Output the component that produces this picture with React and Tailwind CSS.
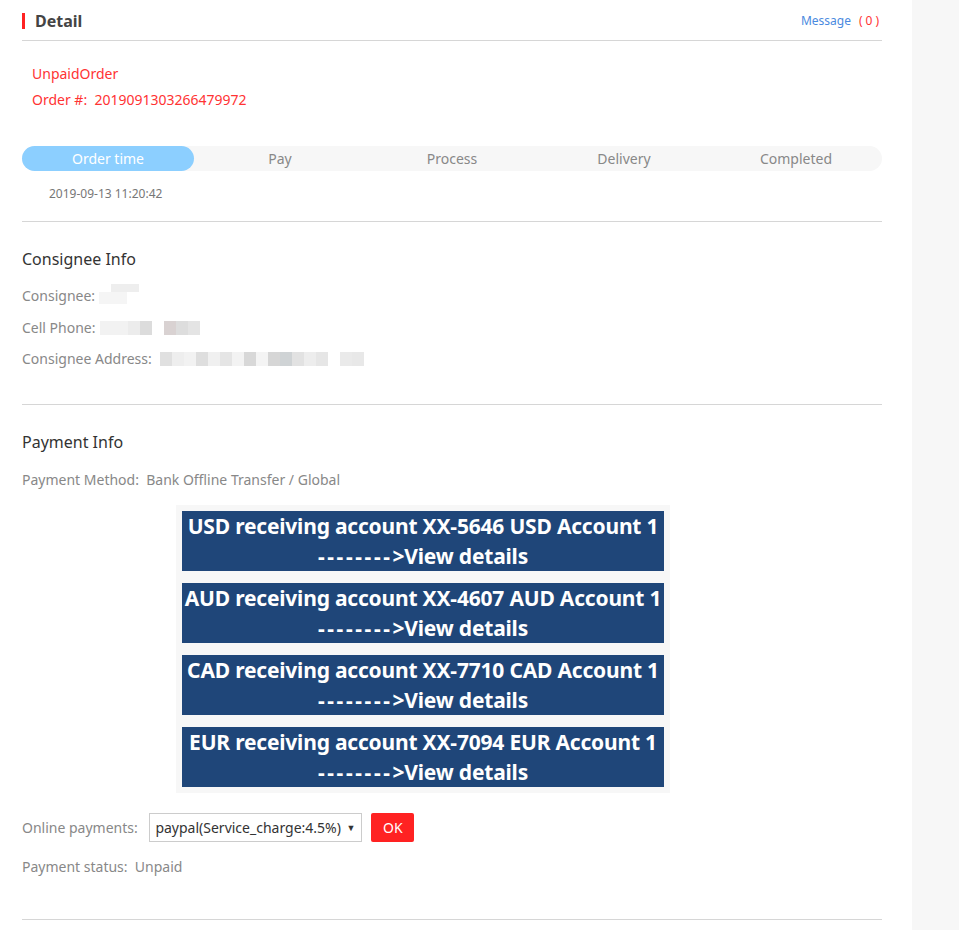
const steps = ['Order time', 'Pay', 'Process', 'Delivery', 'Completed'];

const accounts = [
  { cur: 'USD', no: '5646' },
  { cur: 'AUD', no: '4607' },
  { cur: 'CAD', no: '7710' },
  { cur: 'EUR', no: '7094' },
];

function Blur({ cells }) {
  return (
    <span className="inline-flex items-center align-middle">
      {cells.map((c, i) => (
        <span key={i} className={c} />
      ))}
    </span>
  );
}

export default function App() {
  return (
    <div className="flex min-h-[930px] bg-[#f7f7f7] font-['Noto_Sans',_'Open_Sans',_sans-serif]">
      <div className="w-[912px] bg-white pl-[22px] pr-[30px]">
        {/* header */}
        <div className="flex items-end justify-between border-b border-[#d6d6d6] pt-[11px] pb-[9px]">
          <div className="flex items-center">
            <span className="h-[16px] w-[3px] bg-[#f22]" />
            <span className="ml-[10px] text-[16px] font-bold leading-[20px] text-[#444]">Detail</span>
          </div>
          <div className="text-[12px] leading-[20px] text-[#4a8ae0]">
            Message<span className="ml-[8px] tracking-[3px] text-[#f33]">(0)</span>
          </div>
        </div>

        <div className="px-[10px] pt-[20px] text-[14px] leading-[26px] text-[#f33]">
          <div>UnpaidOrder</div>
          <div>Order #:&nbsp; 2019091303266479972</div>
        </div>

        {/* steps */}
        <div className="mt-[33px] grid grid-cols-5 rounded-full bg-[#f7f7f7] text-[14px] leading-[25px] text-[#888]">
          {steps.map((s, i) => (
            <div
              key={s}
              className={i === 0 ? 'rounded-full bg-[#8ccfff] text-center text-white' : 'text-center'}
            >
              {s}
            </div>
          ))}
        </div>
        <div className="pl-[27px] pt-[13px] pb-[17px] text-[12px] leading-[20px] text-[#777]">
          2019-09-13 11:20:42
        </div>

        {/* consignee */}
        <div className="border-t border-[#d6d6d6] pt-[24px] pb-[34px]">
          <h2 className="text-[16px] leading-[26px] text-[#333]">Consignee Info</h2>
          <div className="mt-[12px] space-y-[9px] text-[14px] leading-[22px] text-[#888]">
            <div className="flex items-center">
              Consignee:
              <span className="relative ml-[4px] inline-block h-[24px] w-[40px]">
                <span className="absolute left-[12px] top-0 h-[8px] w-[28px] bg-[#eee]" />
                <span className="absolute left-0 top-[8px] h-[12px] w-[28px] bg-[#f5f5f5]" />
              </span>
            </div>
            <div className="flex items-center">
              Cell Phone:
              <span className="ml-[4px]" />
              <Blur
                cells={[
                  'h-[14px] w-[28px] bg-[#f2f2f2]',
                  'h-[14px] w-[12px] bg-[#ececec]',
                  'h-[14px] w-[12px] bg-[#dcdcdc]',
                  'h-[14px] w-[12px] bg-white',
                  'h-[14px] w-[12px] bg-[#d9d2d2]',
                  'h-[14px] w-[12px] bg-[#dddddd]',
                  'h-[14px] w-[12px] bg-[#e4e4e4]',
                ]}
              />
            </div>
            <div className="flex items-center">
              Consignee Address:
              <span className="ml-[8px]" />
              <Blur
                cells={[
                  'h-[14px] w-[12px] bg-[#e0e0e0]',
                  'h-[14px] w-[12px] bg-[#eeeeee]',
                  'h-[14px] w-[12px] bg-[#f2f2f2]',
                  'h-[14px] w-[12px] bg-[#dedede]',
                  'h-[14px] w-[12px] bg-[#f0f0f0]',
                  'h-[14px] w-[12px] bg-[#e5e5e5]',
                  'h-[14px] w-[12px] bg-[#f3f3f3]',
                  'h-[14px] w-[12px] bg-[#d8d8d8]',
                  'h-[14px] w-[12px] bg-[#f4f4f4]',
                  'h-[14px] w-[12px] bg-[#d6d6d6]',
                  'h-[14px] w-[12px] bg-[#cfd3d5]',
                  'h-[14px] w-[12px] bg-[#e2e2e2]',
                  'h-[14px] w-[12px] bg-[#ededed]',
                  'h-[14px] w-[12px] bg-[#e6e6e6]',
                  'h-[14px] w-[12px] bg-white',
                  'h-[14px] w-[12px] bg-[#eaeaea]',
                  'h-[14px] w-[12px] bg-[#e8e8e8]',
                ]}
              />
            </div>
          </div>
        </div>

        {/* payment */}
        <div className="border-t border-[#d6d6d6] pt-[24px]">
          <h2 className="text-[16px] leading-[26px] text-[#333]">Payment Info</h2>
          <div className="mt-[14px] text-[14px] leading-[22px] text-[#888]">
            Payment Method:&nbsp; Bank Offline Transfer / Global
          </div>

          <div className="ml-[154px] mt-[14px] w-[494px] space-y-[12px] bg-[#f7f7f7] px-[6px] py-[6px]">
            {accounts.map((a) => (
              <div
                key={a.cur}
                className="bg-[#1f4679] text-center text-[21px] font-bold leading-[30px] tracking-[-0.2px] text-white"
              >
                <div>
                  {a.cur} receiving account XX-{a.no} {a.cur} Account 1
                </div>
                <div>
                  <span className="tracking-[2.6px]">--------</span>&gt;View details
                </div>
              </div>
            ))}
          </div>

          <div className="mt-[20px] flex items-center text-[14px] text-[#888]">
            <span>Online payments:&nbsp;</span>
            <div className="ml-[8px] flex h-[29px] w-[213px] items-center justify-between border border-[#ccc] pl-[5px] pr-[6px] text-[14px] text-[#333]">
              <span>paypal(Service_charge:4.5%)</span>
              <span className="text-[9px] leading-none text-[#333]">▼</span>
            </div>
            <button className="ml-[9px] h-[29px] w-[43px] rounded-[2px] bg-[#f22] text-[14px] text-white">
              OK
            </button>
          </div>
          <div className="mt-[14px] text-[14px] leading-[22px] text-[#888]">Payment status:&nbsp; Unpaid</div>

          <div className="mt-[41px] border-t border-[#d6d6d6]" />
        </div>
      </div>
    </div>
  );
}
